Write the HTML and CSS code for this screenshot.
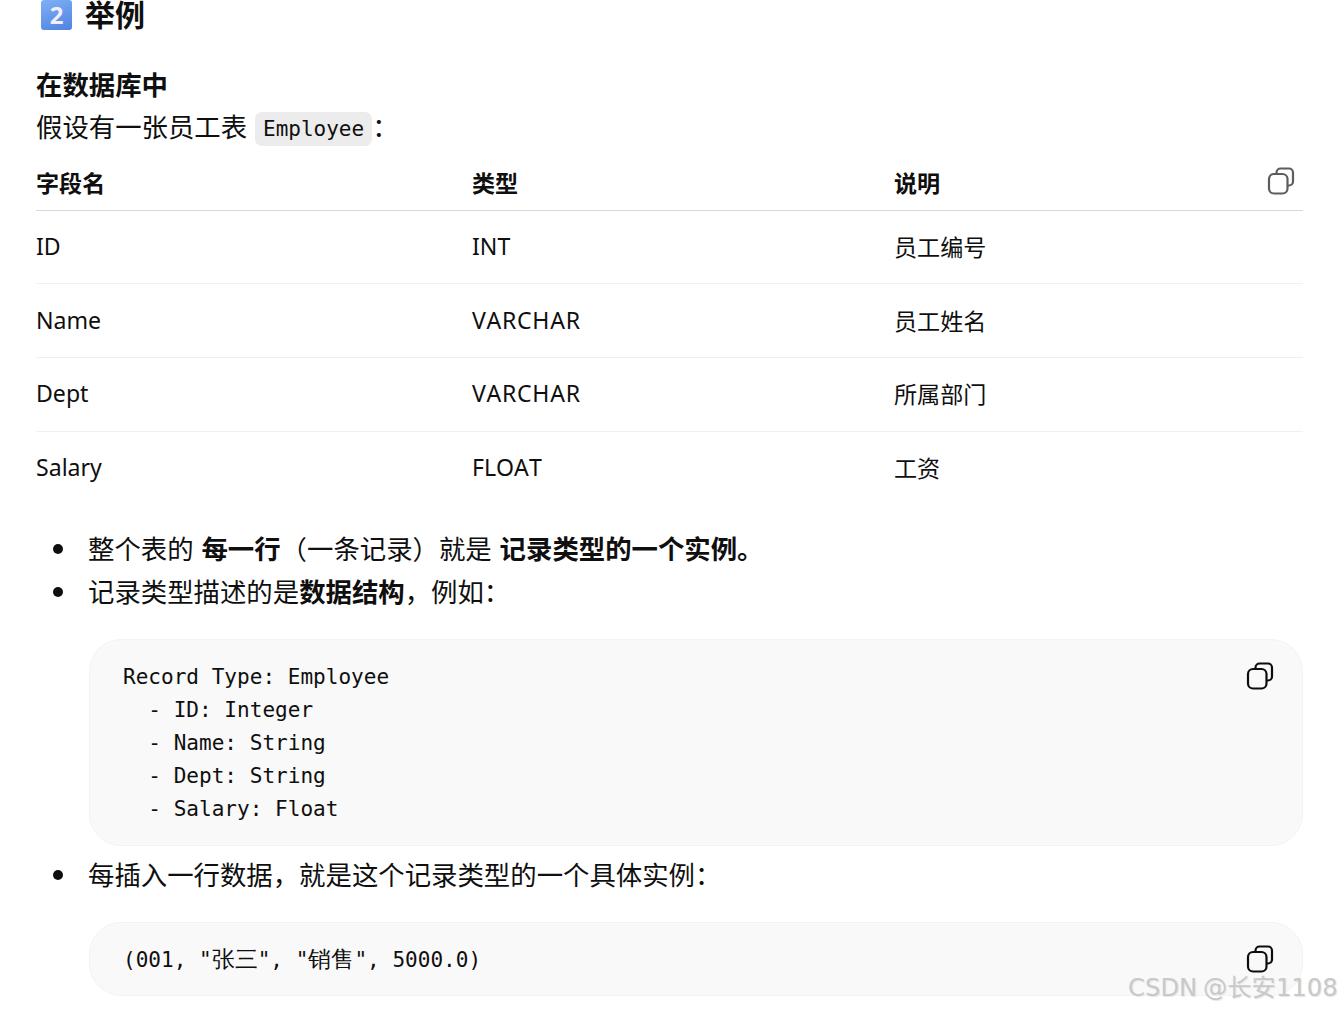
FILE: index.html
```html
<!DOCTYPE html>
<html lang="zh">
<head>
<meta charset="utf-8">
<title>举例</title>
<link rel="stylesheet" href="styles.css">
</head>
<body>
<main class="doc">
  <h2 class="heading"><span class="keycap">2</span><span>举例</span></h2>
  <p class="lead"><strong>在数据库中</strong></p>
  <p class="para">假设有一张员工表 <code class="inline">Employee</code>：</p>
  <div class="table-wrap">
    <button class="copy copy-table" aria-label="复制"><svg viewBox="0 0 28 28" width="28" height="28"><use href="#copy-icon"/></svg></button>
    <table class="data">
      <thead><tr><th class="c1">字段名</th><th class="c2">类型</th><th>说明</th></tr></thead>
      <tbody>
        <tr><td>ID</td><td>INT</td><td>员工编号</td></tr>
        <tr><td>Name</td><td class="wide">VARCHAR</td><td>员工姓名</td></tr>
        <tr><td>Dept</td><td class="wide">VARCHAR</td><td>所属部门</td></tr>
        <tr><td>Salary</td><td>FLOAT</td><td>工资</td></tr>
      </tbody>
    </table>
  </div>
  <ul class="list first">
    <li>整个表的 <strong>每一行</strong>（一条记录）就是 <strong>记录类型的一个实例。</strong></li>
    <li>记录类型描述的是<strong>数据结构</strong>，例如：</li>
  </ul>
  <div class="code-block">
    <button class="copy copy-code" aria-label="复制"><svg viewBox="0 0 28 28" width="28" height="28"><use href="#copy-icon"/></svg></button>
<pre>Record Type: Employee
  - ID: Integer
  - Name: String
  - Dept: String
  - Salary: Float</pre>
  </div>
  <ul class="list">
    <li>每插入一行数据，就是这个记录类型的一个具体实例：</li>
  </ul>
  <div class="code-block short">
    <button class="copy copy-code" aria-label="复制"><svg viewBox="0 0 28 28" width="28" height="28"><use href="#copy-icon"/></svg></button>
<pre>(001, "<span class="cjk">张三</span>", "<span class="cjk">销售</span>", 5000.0)</pre>
  </div>
</main>
<div class="watermark">CSDN @长安1108</div>
<svg class="defs" width="0" height="0" aria-hidden="true">
  <symbol id="copy-icon" viewBox="0 0 28 28">
    <path d="M9.5 6.500V5.500a4 4 0 0 1 4-4h8.500a4 4 0 0 1 4 4v9a4 4 0 0 1-4 4h-1" fill="none" stroke="currentColor" stroke-width="2.200"/>
    <rect x="2" y="7" width="18.500" height="19.500" rx="5" fill="none" stroke="currentColor" stroke-width="2.200"/>
  </symbol>
</svg>
</body>
</html>
```
FILE: styles.css
```css
html, body { margin: 0; padding: 0; background: #fff; }
body {
  height: 1009px;
  overflow: hidden;
  position: relative;
  font-family: "Noto Sans", "Noto Sans CJK SC", sans-serif;
  color: #0f0f0f;
}
.doc { padding: 0 39px 0 36px; }
.heading {
  display: flex;
  align-items: center;
  gap: 13px;
  margin: 0 0 0 5px;
  height: 30px;
  font-size: 30px;
  line-height: 30px;
  font-weight: 700;
}
.keycap {
  width: 31px;
  height: 30px;
  border-radius: 3px;
  background: linear-gradient(160deg, #7fb0f5, #4f82e0);
  color: #f3eeff;
  font-size: 24px;
  line-height: 29px;
  text-align: center;
}
.lead { margin: 34px 0 0; font-size: 26.400px; line-height: 42px; }
.para { margin: 0; font-size: 26.400px; line-height: 42px; }
strong { font-weight: 700; }
.inline {
  font-family: "DejaVu Sans Mono", monospace;
  font-size: 21px;
  background: #ececec;
  border-radius: 7px;
  padding: 5px 8px;
  margin-left: 1px;
  vertical-align: 1px;
}
.table-wrap { position: relative; margin-top: 8px; }
.copy {
  position: absolute;
  border: 0;
  padding: 0;
  background: none;
  line-height: 0;
}
.copy-table { right: 8px; top: 9px; color: #5d5d5d; }
.data {
  width: 100%;
  border-collapse: collapse;
  table-layout: fixed;
  font-size: 23.100px;
  font-kerning: none;
}
.data .c1 { width: 436px; }
.data .c2 { width: 422px; }
.data th {
  text-align: left;
  font-weight: 700;
  padding: 0 0 4px;
  height: 48px;
  border-bottom: 1px solid #d9d9d9;
}
.data td {
  padding: 0 0 2px;
  height: 71px;
  border-bottom: 1px solid #f0f0f0;
}
.data tbody tr:first-child td { height: 70px; }
.data tbody tr:nth-child(n+3) td { padding-bottom: 4px; height: 69px; }
.data tbody tr:last-child td { border-bottom: 0; }
.data .wide { letter-spacing: 0.700px; }
.list {
  margin: 0;
  padding: 0 0 0 52px;
  list-style: none;
  font-size: 26.400px;
  line-height: 43px;
  word-spacing: 1px;
}
.list.first { margin-top: 23px; }
.list li { position: relative; }
.list li::before {
  content: "";
  position: absolute;
  left: -35px;
  top: 16px;
  width: 10px;
  height: 10px;
  border-radius: 50%;
  background: #0f0f0f;
}
.code-block {
  position: relative;
  margin: 25px 0 8px 53px;
  background: #f9f9f9;
  border: 1px solid #f3f3f3;
  border-radius: 32px;
  padding: 20px 33px;
}
.code-block.short { padding: 19px 33px; }
.code-block pre {
  margin: 0;
  font-family: "DejaVu Sans Mono", monospace;
  font-size: 21.050px;
  line-height: 33px;
}
.cjk { font-size: 23.300px; }
.copy-code { right: 28px; top: 22px; color: #0d0d0d; }
.watermark {
  position: absolute;
  left: 1128px;
  top: 970px;
  font-family: "DejaVu Sans", "Noto Sans CJK SC", sans-serif;
  font-size: 24.300px;
  line-height: 36px;
  color: #c9c9c9;
  text-shadow: 1px 1px 1px #e5e5e5;
  white-space: nowrap;
  word-spacing: -2px;
}
.defs { position: absolute; }
```
